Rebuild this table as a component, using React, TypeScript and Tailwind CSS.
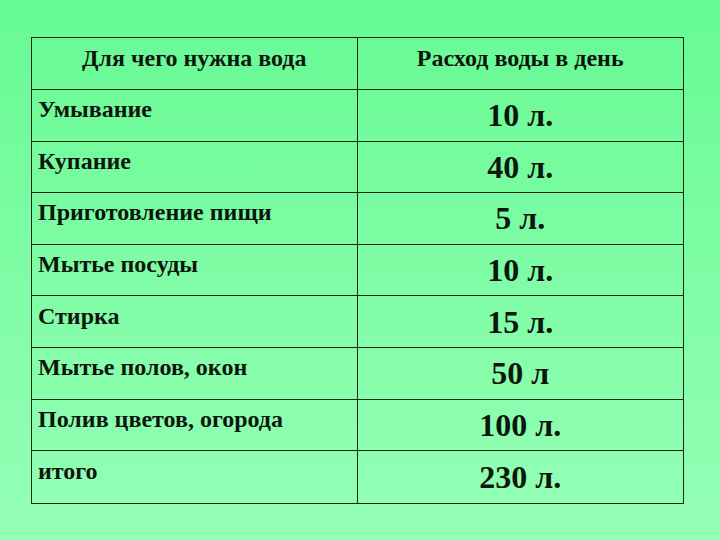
import React from "react";

const rows: [string, string][] = [
  ["Умывание", "10 л."],
  ["Купание", "40 л."],
  ["Приготовление пищи", "5 л."],
  ["Мытье посуды", "10 л."],
  ["Стирка", "15 л."],
  ["Мытье полов, окон", "50 л"],
  ["Полив цветов, огорода", "100 л."],
  ["итого", "230 л."],
];

export default function App() {
  return (
    <div
      className="w-[720px] h-[540px] bg-gradient-to-b from-[#66fa94] to-[#94ffb6] pt-[37px] pl-[31px] text-[#0d160d]"
      style={{ fontFamily: '"Liberation Serif", "Times New Roman", serif' }}
    >
      <div className="w-[653px] grid grid-cols-2 border-[1.5px] border-[#142814]">
        <div className="h-[52px] flex items-center justify-center pb-3 font-bold text-[24px] border-r-[1.5px] border-b-[1.5px] border-[#142814]">
          Для чего нужна вода
        </div>
        <div className="h-[52px] flex items-center justify-center pb-3 font-bold text-[24px] border-b-[1.5px] border-[#142814]">
          Расход воды в день
        </div>
        {rows.map(([a, b], i) => {
          const last = i === rows.length - 1;
          return (
            <React.Fragment key={i}>
              <div
                className={
                  "h-[51.6px] flex items-center pl-[6px] pb-3 font-bold text-[24px] border-r-[1.5px] border-[#142814] " +
                  (last ? "" : "border-b-[1.5px]")
                }
              >
                {a}
              </div>
              <div
                className={
                  "h-[51.6px] flex items-center justify-center font-bold text-[32px] border-[#142814] " +
                  (last ? "" : "border-b-[1.5px]")
                }
              >
                {b}
              </div>
            </React.Fragment>
          );
        })}
      </div>
    </div>
  );
}
